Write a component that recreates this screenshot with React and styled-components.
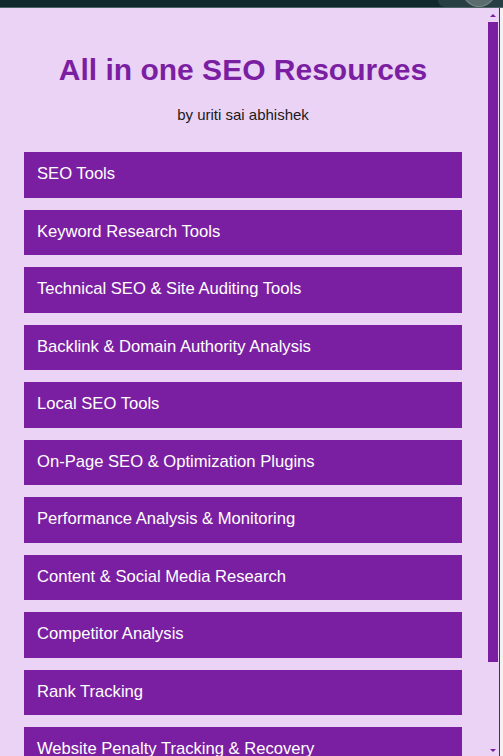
import styled, { createGlobalStyle } from 'styled-components'

const GlobalStyle = createGlobalStyle`
  html, body {
    margin: 0;
    padding: 0;
    overflow: hidden;
  }
  body {
    font-family: "Liberation Sans", Arial, sans-serif;
  }
`

const purple = '#7b1fa2'
const lavender = '#ebd3f6'

const Window = styled.div`
  height: 100vh;
  display: flex;
  flex-direction: column;
  overflow: hidden;
  background: ${lavender};
`

const TitleBar = styled.div`
  height: 7px;
  flex: none;
  background: #11282d;
  border-bottom: 1px solid #4f6266;
  display: flex;
  justify-content: flex-end;
  overflow: hidden;
`

const Tab = styled.div`
  width: 65px;
  height: 7px;
  background: #273f43;
  border-radius: 0 0 0 12px;
  display: flex;
  padding-left: 25px;
  box-sizing: border-box;
`

const Knob = styled.div`
  width: 32px;
  height: 32px;
  margin-top: -26px;
  border-radius: 50%;
  background: #5b6c6f;
  box-shadow: 0 0 0 1px #7a898b;
`

const Viewport = styled.div`
  flex: 1;
  min-height: 0;
  display: flex;
`

const Page = styled.div`
  flex: 1;
  min-width: 0;
  overflow: hidden;
  padding: 44px 24px 0;
`

const Title = styled.h1`
  margin: 0;
  font-size: 30px;
  line-height: 36px;
  font-weight: 700;
  text-align: center;
  color: ${purple};
`

const Byline = styled.p`
  margin: 18px 0 0;
  font-size: 15px;
  line-height: 18px;
  text-align: center;
  color: #1a1a1a;
`

const List = styled.div`
  margin-top: 28px;
  display: flex;
  flex-direction: column;
  gap: 12px;
`

const Item = styled.button`
  display: block;
  width: 100%;
  border: none;
  border-radius: 0;
  padding: 11px 12px 13px 13px;
  margin: 0;
  background: ${purple};
  color: #fff;
  font-family: inherit;
  font-size: 16.6px;
  line-height: 21.5px;
  text-align: left;
  white-space: nowrap;
  cursor: pointer;
`

const Scrollbar = styled.div`
  width: 13px;
  flex: none;
  display: flex;
  flex-direction: column;
  padding: 6px 0 4px 2px;
  box-sizing: border-box;
`

const Arrow = styled.div`
  width: 0;
  height: 0;
  margin-left: 2px;
  border-left: 3px solid transparent;
  border-right: 3px solid transparent;
  ${p => p.down
    ? `border-top: 3px solid ${purple}; margin-top: auto;`
    : `border-bottom: 3px solid ${purple};`}
`

const Thumb = styled.div`
  width: 10px;
  height: 640px;
  margin-top: 5px;
  background: ${purple};
`

const Edge = styled.div`
  width: 3px;
  flex: none;
  border-left: 1px solid #3b3b3b;
  background: #f2f2f2;
`

const resources = [
  'SEO Tools',
  'Keyword Research Tools',
  'Technical SEO & Site Auditing Tools',
  'Backlink & Domain Authority Analysis',
  'Local SEO Tools',
  'On-Page SEO & Optimization Plugins',
  'Performance Analysis & Monitoring',
  'Content & Social Media Research',
  'Competitor Analysis',
  'Rank Tracking',
  'Website Penalty Tracking & Recovery'
]

function App() {
  return <>
    <GlobalStyle/>
    <Window>
      <TitleBar>
        <Tab>
          <Knob/>
        </Tab>
      </TitleBar>
      <Viewport>
        <Page>
          <Title>All in one SEO Resources</Title>
          <Byline>by uriti sai abhishek</Byline>
          <List>
            {resources.map(r => <Item key={r}>{r}</Item>)}
          </List>
        </Page>
        <Scrollbar>
          <Arrow/>
          <Thumb/>
          <Arrow down/>
        </Scrollbar>
        <Edge/>
      </Viewport>
    </Window>
  </>
}

export default App
